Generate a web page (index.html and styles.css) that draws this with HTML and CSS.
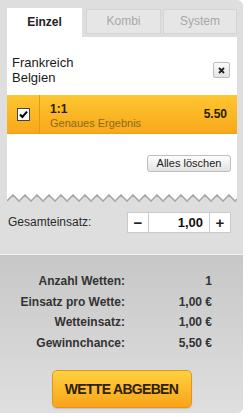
FILE: index.html
```html
<!DOCTYPE html>
<html lang="de">
<head>
<meta charset="utf-8">
<title>Wettschein</title>
<link rel="stylesheet" href="styles.css">
</head>
<body>
<div class="panel">
  <div class="tabs">
    <div class="tab active">Einzel</div>
    <div class="tab tab-kombi">Kombi</div>
    <div class="tab tab-system">System</div>
  </div>
  <div class="sheet">
    <div class="match">
      <div class="teams">Frankreich<br>Belgien</div>
      <button class="remove" type="button" aria-label="Entfernen">
        <svg width="7" height="7" viewBox="0 0 7 7"><path d="M1 1L6 6M6 1L1 6" stroke="#222" stroke-width="1.8" fill="none"/></svg>
      </button>
    </div>
    <div class="tip">
      <div class="tip-check">
        <svg width="13" height="13" viewBox="0 0 13 13"><rect x="0.5" y="0.5" width="12" height="12" fill="#fff" stroke="#444"/><path d="M3 6.5L5.4 9L10 3.6" stroke="#000" stroke-width="2" fill="none"/></svg>
      </div>
      <div class="tip-info">
        <div class="tip-name">1:1</div>
        <div class="tip-market">Genaues Ergebnis</div>
      </div>
      <div class="tip-odds">5.50</div>
    </div>
    <div class="actions">
      <button class="clear" type="button">Alles löschen</button>
    </div>
  </div>
  <svg class="zigzag" width="230" height="9" viewBox="0 0 230 9">
    <path d="M0 0L0 7L6 1L12 7L18 1L24 7L30 1L36 7L42 1L48 7L54 1L60 7L66 1L72 7L78 1L84 7L90 1L96 7L102 1L108 7L114 1L120 7L126 1L132 7L138 1L144 7L150 1L156 7L162 1L168 7L174 1L180 7L186 1L192 7L198 1L204 7L210 1L216 7L222 1L228 7L230 5L230 0Z" fill="#fff"/>
    <path d="M0 7L6 1L12 7L18 1L24 7L30 1L36 7L42 1L48 7L54 1L60 7L66 1L72 7L78 1L84 7L90 1L96 7L102 1L108 7L114 1L120 7L126 1L132 7L138 1L144 7L150 1L156 7L162 1L168 7L174 1L180 7L186 1L192 7L198 1L204 7L210 1L216 7L222 1L228 7L230 5" fill="none" stroke="#a8a8a8" stroke-width="1.6"/>
  </svg>
  <div class="stake">
    <span class="stake-label">Gesamteinsatz:</span>
    <div class="stepper">
      <span class="step minus">&minus;</span>
      <span class="step-value">1,00</span>
      <span class="step plus">+</span>
    </div>
  </div>
  <div class="summary">
    <div class="rows">
      <span class="lbl">Anzahl Wetten:</span><span class="val">1</span>
      <span class="lbl">Einsatz pro Wette:</span><span class="val">1,00 €</span>
      <span class="lbl">Wetteinsatz:</span><span class="val">1,00 €</span>
      <span class="lbl">Gewinnchance:</span><span class="val">5,50 €</span>
    </div>
    <button class="submit" type="button">WETTE ABGEBEN</button>
  </div>
</div>
</body>
</html>
```

FILE: styles.css
```css
* { box-sizing: border-box; }
html, body { margin: 0; padding: 0; background: #fff; }
body { font-family: "Liberation Sans", Arial, sans-serif; color: #222; }

.panel {
  width: 243px;
  height: 413px;
  background: #dedede;
  border-top-right-radius: 6px;
  border-bottom-right-radius: 6px;
  padding-top: 8px;
  display: flex;
  flex-direction: column;
  overflow: hidden;
}

.tabs {
  display: flex;
  align-items: flex-start;
  height: 29px;
  margin: 0 6px 0 7px;
}
.tab {
  font-size: 12px;
  text-align: center;
  width: 75px;
}
.tab.active {
  background: #fff;
  height: 29px;
  line-height: 28px;
  font-weight: bold;
  color: #222;
  margin-right: 4px;
}
.tab-kombi, .tab-system {
  margin-top: 1px;
  height: 25px;
  line-height: 23px;
  background: #e6e6e6;
  border: 1px solid #d4d4d4;
  color: #a8a8a8;
}
.tab-kombi { margin-right: 2px; }
.tab-system { width: 74px; }

.sheet {
  margin: 0 6px 0 7px;
  background: #fff;
}

.match {
  display: flex;
  align-items: center;
  justify-content: space-between;
  height: 58px;
  padding: 18px 7px 10px 5px;
}
.teams {
  font-size: 13px;
  line-height: 15px;
  color: #1a1a1a;
}
.remove {
  width: 17px;
  height: 16px;
  padding: 0;
  margin: 0;
  border: 1px solid #bdbdbd;
  border-radius: 2px;
  background: linear-gradient(#fbfbfb, #e4e4e4);
  display: flex;
  align-items: center;
  justify-content: center;
}
.remove svg { display: block; }

.tip {
  display: flex;
  height: 39px;
  background: linear-gradient(#fec630, #f8a81b);
  border-bottom: 1px solid #e9a01d;
}
.tip-check {
  width: 33px;
  border-right: 1px solid #e39a18;
  display: flex;
  align-items: center;
  justify-content: center;
  padding-left: 1px;
}
.tip-check svg { display: block; }
.tip-info {
  flex: 1;
  padding: 7px 0 0 10px;
}
.tip-name {
  font-size: 12px;
  line-height: 14px;
  font-weight: bold;
  color: #2a1e00;
}
.tip-market {
  font-size: 11px;
  line-height: 14px;
  color: #8d6a1c;
}
.tip-odds {
  display: flex;
  align-items: center;
  padding-right: 10px;
  font-size: 12px;
  font-weight: bold;
  color: #2a1e00;
}

.actions {
  height: 60px;
  padding: 21px 6px 0 0;
  display: flex;
  justify-content: flex-end;
  align-items: flex-start;
}
.clear {
  height: 17px;
  width: 84px;
  padding: 0;
  border: 1px solid #bdbdbd;
  border-radius: 3px;
  background: linear-gradient(#fdfdfd, #e3e3e3);
  font-family: "Liberation Sans", Arial, sans-serif;
  font-size: 11px;
  color: #222;
  line-height: 15px;
}

.zigzag {
  display: block;
  margin: 0 6px 0 7px;
}

.stake {
  display: flex;
  align-items: center;
  justify-content: space-between;
  margin-top: 9px;
  height: 21px;
  padding: 0 12px 0 8px;
}
.stake-label {
  font-size: 12px;
  color: #2a2a2a;
  margin-top: -2px;
}
.stepper {
  display: flex;
  height: 21px;
  border: 1px solid #cacaca;
  background: #fff;
}
.step {
  width: 20px;
  display: flex;
  align-items: center;
  justify-content: center;
  font-size: 15px;
  font-weight: bold;
  color: #222;
}
.plus { width: 21px; border-left: 1px solid #cacaca; }
.step-value {
  width: 61px;
  border-left: 1px solid #cacaca;
  text-align: right;
  padding-right: 6px;
  font-size: 13px;
  font-weight: bold;
  line-height: 19px;
  color: #111;
}

.summary {
  margin-top: 21px;
  flex: 1;
  border-top: 1px solid #f0f0f0;
  background: linear-gradient(#c7c7c7, #dfdfdf);
  padding-top: 16px;
  display: flex;
  flex-direction: column;
  align-items: center;
}
.rows {
  align-self: flex-start;
  display: grid;
  grid-template-columns: 125px 87px;
  font-size: 12px;
  font-weight: bold;
  line-height: 20.67px;
  color: #333;
}
.lbl, .val { text-align: right; }

.submit {
  margin-top: 16px;
  width: 140px;
  height: 38px;
  border: 1px solid #e0961c;
  border-radius: 5px;
  background: linear-gradient(#fed13f, #f9a41a);
  font-family: "Liberation Sans", Arial, sans-serif;
  font-size: 14px;
  font-weight: bold;
  letter-spacing: -0.7px;
  color: #2e2100;
  box-shadow: 0 1px 1px rgba(0,0,0,0.12);
  padding: 0;
}
```
